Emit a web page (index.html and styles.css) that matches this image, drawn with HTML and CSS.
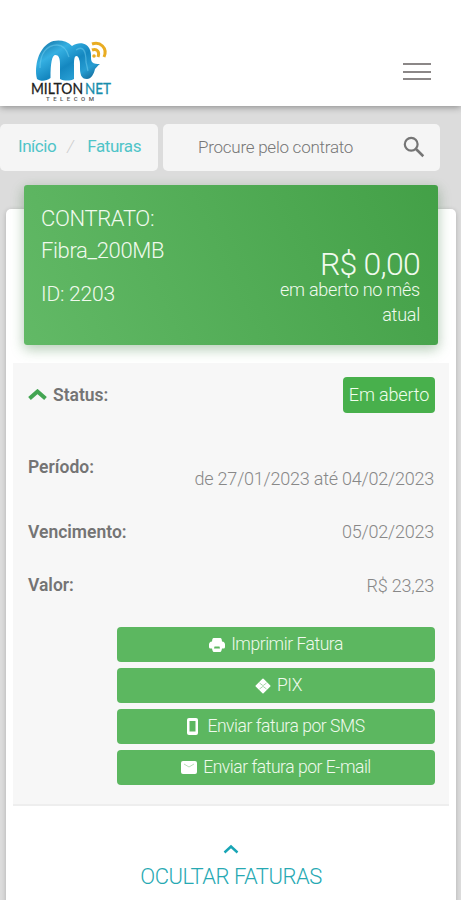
FILE: index.html
```
<!DOCTYPE html>
<html lang="pt-BR">
<head>
<meta charset="utf-8">
<meta name="viewport" content="width=device-width, initial-scale=1">
<title>Milton Net Telecom - Faturas</title>
<link rel="stylesheet" href="styles.css">
</head>
<body>
<header class="topbar">
  <svg class="logo" width="84" height="66" viewBox="0 0 84 66" role="img" aria-label="Milton Net Telecom">
    <defs>
      <linearGradient id="wave" x1="0" y1="0" x2="1" y2="1">
        <stop offset="0" stop-color="#126b9c"/><stop offset=".3" stop-color="#35b0e2"/><stop offset=".55" stop-color="#1487c0"/><stop offset=".75" stop-color="#279dd2"/><stop offset="1" stop-color="#0b5380"/>
      </linearGradient>
    </defs>
    <path fill="url(#wave)" d="M7 42C4 28 9 12 19 6c7-4 17-3 23 3 7-5 16-3 18 4 2 5 0 9 2 12 2 2 5 2 8 2-2 1-3 3-5 5-1 5-4 10-8 10-6 0-7-5-7-11 0-7-1-12-3.500-12C44 19 44 24 44 29v13c-4 2-10 2-14 0V27c0-6-1.500-9-4.500-9C22 18 20.500 26 20.500 41c-4 3-9.500 4-13.500 1Z"/>
    <path fill="none" stroke="#7bd5f4" stroke-width="1.300" opacity=".45" d="M10 31c0-15 7-23 17-23 6 0 10 5 12 12M46 13c7-5 10 1 10 12l2 9"/>
    <path fill="#fff" d="M21.500 42c0-13 .5-22 4-23 3 0 4 4 4 9v14ZM44.500 42V29c0-5 .5-8 2.500-8 2.500 0 3 5 3 10 0 4 0 8 1 11Z"/>
    <g fill="none" stroke="#e9ac22" stroke-width="3"><path d="M62 7c8-3 16 4 12 13"/><path d="M62 13c5-2 8 2 6 7"/></g>
    <circle cx="64" cy="19" r="1.800" fill="#e9ac22"/>
    <text class="brand" x="1" y="56.500" textLength="52" lengthAdjust="spacingAndGlyphs">MILTON</text>
    <text class="brand net" x="55" y="56.500" textLength="26" lengthAdjust="spacingAndGlyphs">NET</text>
    <text class="telecom" x="16" y="64" textLength="48" lengthAdjust="spacing">TELECOM</text>
  </svg>
  <button class="menu" aria-label="Menu"><span></span><span></span><span></span></button>
</header>
<div class="tools">
  <nav class="crumbs"><a>Início</a><i>/</i><a>Faturas</a></nav>
  <div class="search"><span>Procure pelo contrato</span>
    <svg width="22" height="22" viewBox="0 0 22 22" fill="none" stroke="#757575"><circle cx="8.2" cy="8.2" r="6.4" stroke-width="2.2"/><path stroke-width="2.6" d="m13 13 7.3 7.2"/></svg>
  </div>
</div>
<main class="card">
  <section class="contract">
    <div class="plan"><p>CONTRATO:</p><p>Fibra_200MB</p><p class="id">ID: 2203</p></div>
    <div class="balance"><strong>R$ 0,00</strong><p>em aberto no mês</p><p>atual</p></div>
  </section>
  <section class="invoice">
    <div class="row status"><b><svg width="19" height="12" viewBox="0 0 19 12" fill="none" stroke="#43a552" stroke-width="4"><path d="m1.500 9.500 8-7 8 7"/></svg><span>Status:</span></b><span class="badge">Em aberto</span></div>
    <div class="row period"><b>Período:</b><span>de 27/01/2023 até 04/02/2023</span></div>
    <div class="row due"><b>Vencimento:</b><span>05/02/2023</span></div>
    <div class="row amount"><b>Valor:</b><span>R$ 23,23</span></div>
    <div class="actions">
      <button><svg width="16" height="14" viewBox="0 0 16 14"><path fill="#fff" d="M4.500 0h7q1 0 1.200 1.500L13 3.500c2 0 3 1.500 3 3V9q0 1.500-1.500 1.500H13L12.500 12.500Q12 14 11 14H5q-1 0-1.500-1.500L3 10.500H1.500Q0 10.500 0 9V6.500c0-1.500 1-3 3-3l.3-2Q3.500 0 4.500 0Z"/><path fill="#5cb760" d="M5.500 8.500h5l.5 2H5z"/></svg><span>Imprimir Fatura</span></button>
      <button class="pix"><svg width="16" height="16" viewBox="0 0 16 16"><path fill="#fff" stroke="#fff" stroke-width="1.500" stroke-linejoin="round" d="m8 1.200 6.800 6.800L8 14.800 1.200 8Z"/><path fill="none" stroke="#8ecb91" stroke-width=".8" d="m4.500 5 3 2.300h1l3-2.300m-7 6 3-2.300h1l3 2.300"/></svg><span>PIX</span></button>
      <button class="sms"><svg width="11" height="17" viewBox="0 0 11 17"><rect width="11" height="17" rx="2" fill="#fff"/><path fill="#5cb760" d="M2.500 3h6v10.500h-6z"/></svg><span>Enviar fatura por SMS</span></button>
      <button><svg width="16" height="13" viewBox="0 0 16 13"><rect width="16" height="13" rx="2" fill="#fff"/><path fill="none" stroke="#afd9b0" stroke-width=".9" d="m3 3 5 3 5-3"/></svg><span>Enviar fatura por E-mail</span></button>
    </div>
  </section>
  <a class="collapse"><svg width="16" height="10" viewBox="0 0 16 10" fill="none" stroke="#18a5b5" stroke-width="2.400"><path d="m1.500 8.500 6.500-6 6.500 6"/></svg><span>OCULTAR FATURAS</span></a>
</main>
</body>
</html>
```
FILE: styles.css
```
* { box-sizing: border-box; }
body { margin: 0; height: 900px; overflow: hidden; background: #dcdcdc; font-family: Roboto, "Liberation Sans", sans-serif; font-weight: 300; }
p { margin: 0; }
button { border: 0; font: inherit; }
span, a, p, b, strong { white-space: nowrap; }
.topbar { height: 106px; padding: 37px 30px 0; display: flex; justify-content: space-between; background: #fff; box-shadow: 0 1px 7px #0006; }
.brand { font: 400 15.5px Lato, sans-serif; fill: #202020; stroke: #202020; stroke-width: .3px; }
.net { fill: #168dac; stroke: #168dac; }
.telecom { font: 500 6px Roboto, sans-serif; fill: #555; }
.menu { width: 28px; height: 17px; margin-top: 26px; padding: 0; display: flex; flex-direction: column; justify-content: space-between; background: none; }
.menu span { height: 2px; background: #8b8787; }
.tools { display: flex; gap: 5px; margin-top: 18px; height: 47px; }
.crumbs, .search { display: flex; align-items: center; background: #f5f5f5; border-radius: 5px; }
.crumbs { width: 158px; padding: 0 0 4px 18px; font-size: 17px; letter-spacing: -.45px; color: #4fc4c8; font-weight: 400; }
.crumbs i { margin: 0 14px 0 11px; color: #ccc; font-weight: 300; }
.search { width: 277px; padding: 0 15px 2px 35px; justify-content: space-between; font-size: 17px; letter-spacing: -.25px; color: #777; }
.card { margin: 38px 5px 0 6px; height: 700px; background: #fff; border-radius: 5px; box-shadow: 0 1px 5px #0003; display: flow-root; }
.contract { width: 414px; height: 160px; margin: -24px 0 0 18px; padding: 18px 18px 0 17px; display: flex; justify-content: space-between; color: #f0faed; background: linear-gradient(65deg, #62b966, #43a047); border-radius: 3px; box-shadow: 0 5px 14px #409b4340, 0 3px 12px #0002; }
.plan { font-size: 22px; line-height: 32px; letter-spacing: -.35px; }
.plan .id { margin-top: 11px; font-size: 21px; letter-spacing: -.2px; }
.balance { padding-top: 48px; text-align: right; font-size: 18px; letter-spacing: -.25px; line-height: 25px; display: flex; flex-direction: column; align-items: flex-end; }
.balance strong { font-size: 32px; line-height: 27px; letter-spacing: -.75px; font-weight: 300; margin-bottom: -1px; }
.invoice { margin: 18px 7px 0; height: 443px; padding: 0 15px; background: #f7f7f7; border-bottom: 2px solid #eee; }
.row { display: flex; align-items: center; justify-content: space-between; font-size: 18px; letter-spacing: -.22px; color: #888; }
.row b { display: flex; align-items: center; color: #747474; font-weight: 600; gap: 6px; font-size: 17.5px; letter-spacing: 0; }
.status { padding-top: 13px; height: 50px; }
.badge { width: 92px; height: 36px; margin-right: -1px; border-radius: 4px; background: #48b04c; color: #f0ffed; display: flex; align-items: center; justify-content: center; letter-spacing: -.15px; }
.period { margin-top: 39px; height: 30px; }
.period span { padding-top: 23px; }
.due { margin-top: 35px; height: 30px; }
.due span { padding-bottom: 1px; }
.amount { margin-top: 23px; height: 30px; }
.actions { margin: 27px 0 0 89px; display: grid; gap: 6px; }
.actions button { width: 318px; height: 35px; padding: 0; display: flex; align-items: center; justify-content: center; gap: 6px; border-radius: 4px; background: #5cb760; color: #f0faed; font-size: 17.5px; letter-spacing: -.45px; }
.actions button span { padding-bottom: 1px; }
.actions .pix { padding-left: 5px; }
.actions .sms { gap: 9px; }
.collapse { display: flex; flex-direction: column; align-items: center; padding-top: 38px; gap: 8px; color: #27a9b3; font-size: 22px; line-height: 30px; letter-spacing: -.5px; }
```
